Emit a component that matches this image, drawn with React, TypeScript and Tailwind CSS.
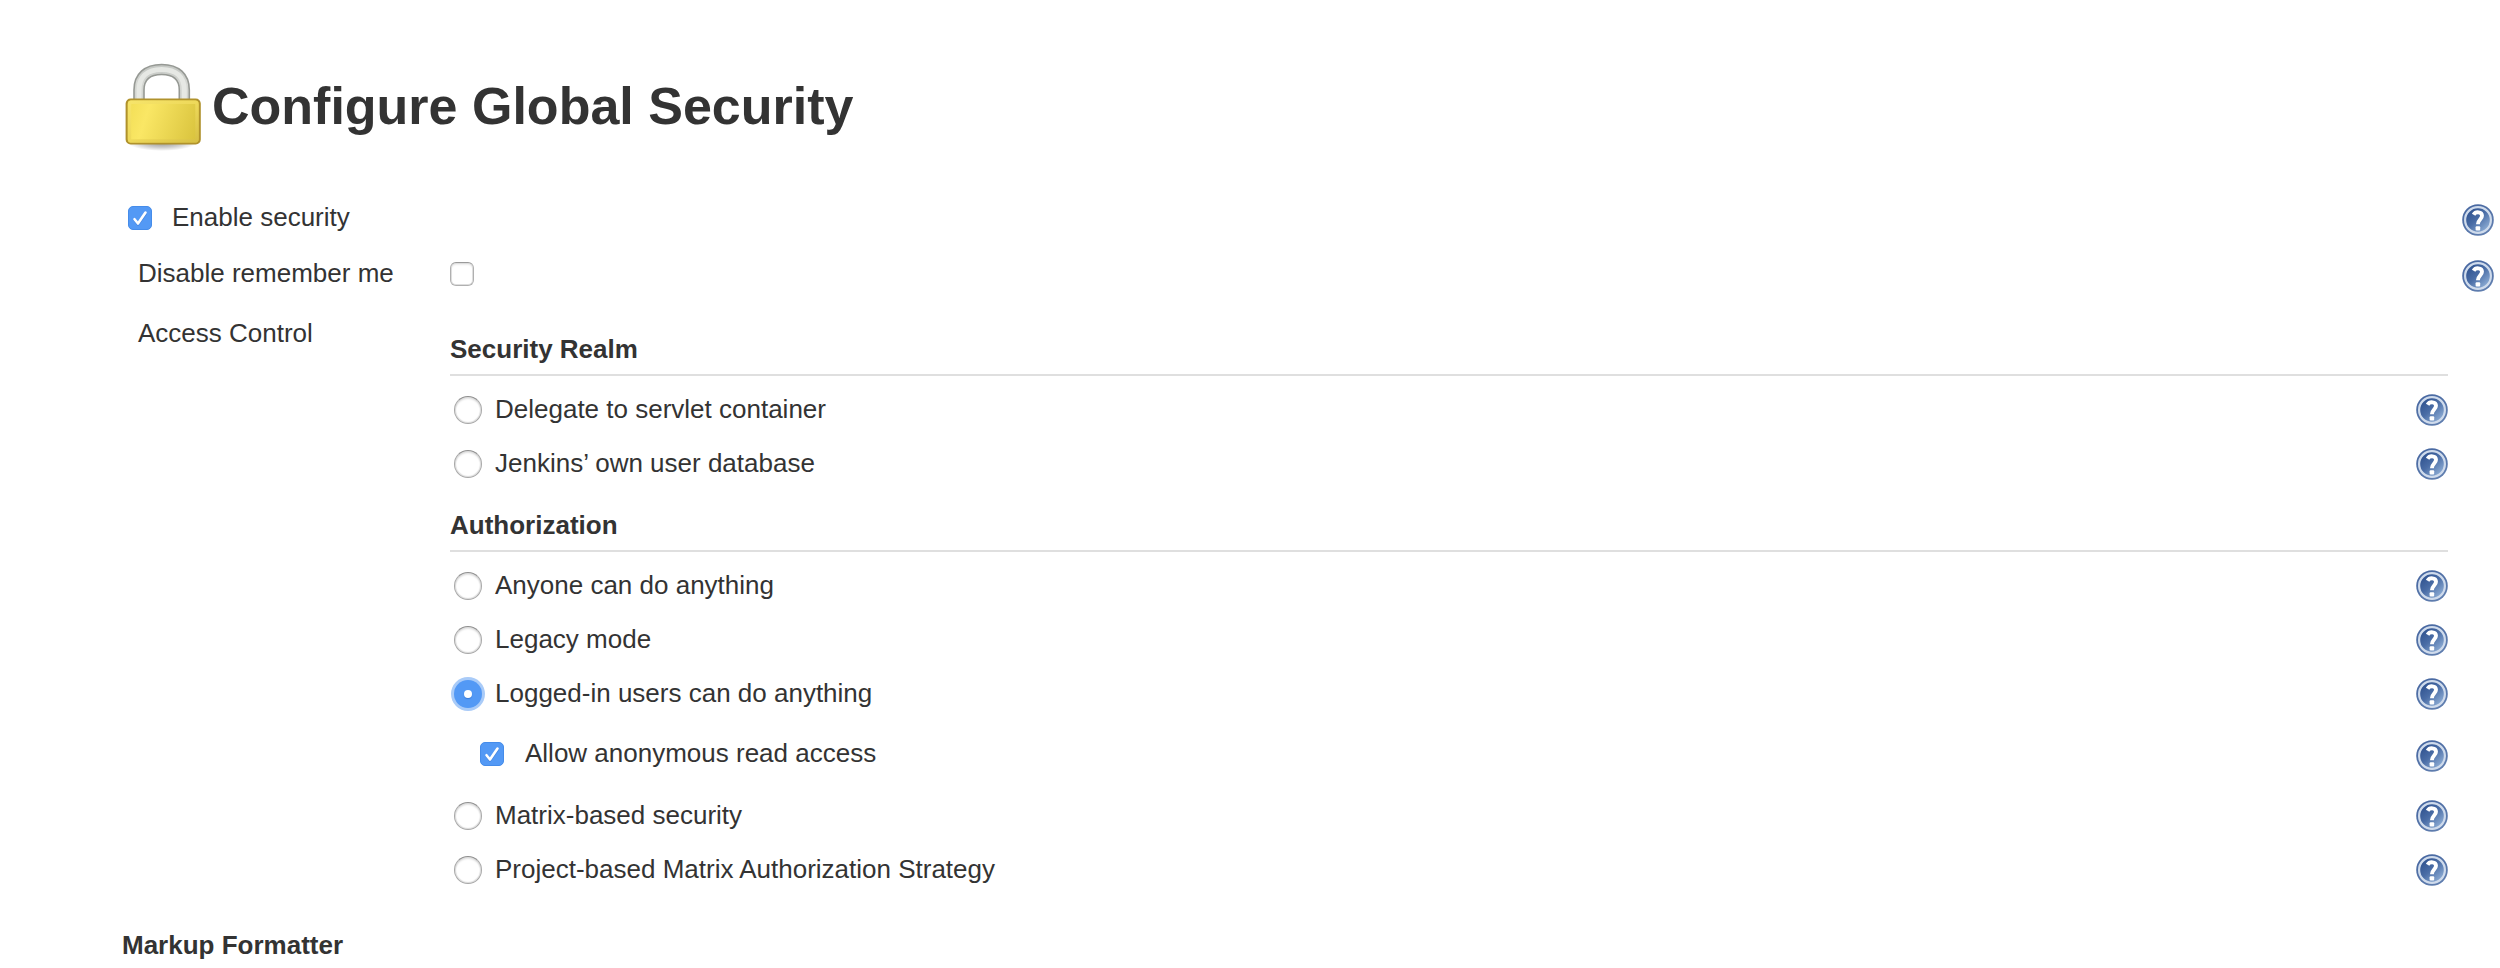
import React from "react";

function HelpIcon() {
  return (
    <svg viewBox="0 0 32 32" className="block h-8 w-8" aria-hidden="true">
      <defs>
        <linearGradient id="help-fill" x1="0.15" y1="0.1" x2="0.9" y2="0.9">
          <stop offset="0" stopColor="#2f528f" />
          <stop offset="0.45" stopColor="#4a6da6" />
          <stop offset="1" stopColor="#94b3d9" />
        </linearGradient>
        <linearGradient id="help-edge" x1="0.2" y1="0" x2="0.8" y2="1">
          <stop offset="0" stopColor="#4666a0" />
          <stop offset="1" stopColor="#6280b0" />
        </linearGradient>
      </defs>
      <circle cx="16" cy="16" r="15.8" fill="url(#help-edge)" />
      <circle cx="16" cy="16" r="12.900" fill="url(#help-fill)" stroke="#cfdbec" strokeWidth="2.200" />
      <path d="M11.600 10.700 C13.500 7.300 20 7.400 20 11.800 C20 15.400 15.900 15.800 15.900 20.300" fill="none" stroke="#fff" strokeWidth="3.900" />
      <rect x="13.600" y="22.200" width="4.600" height="4.400" rx="1" fill="#fff" />
    </svg>
  );
}

function LockIcon() {
  return (
    <svg viewBox="0 0 96 96" className="block h-24 w-24 shrink-0" aria-hidden="true">
      <defs>
        <linearGradient id="lock-body" x1="0" y1="0.4" x2="1" y2="0.6">
          <stop offset="0" stopColor="#f3df58" />
          <stop offset="0.25" stopColor="#fae765" />
          <stop offset="1" stopColor="#dac43e" />
        </linearGradient>
        <linearGradient id="lock-rim" x1="0" y1="0" x2="1" y2="1">
          <stop offset="0" stopColor="#f6e46a" />
          <stop offset="0.5" stopColor="#eed95a" />
          <stop offset="1" stopColor="#d8c145" />
        </linearGradient>
        <linearGradient id="lock-metal" x1="0" y1="0" x2="0" y2="1">
          <stop offset="0" stopColor="#c6c9c5" />
          <stop offset="0.4" stopColor="#d6d8d4" />
          <stop offset="1" stopColor="#cfd2cd" />
        </linearGradient>
        <radialGradient id="lock-shadow">
          <stop offset="0" stopColor="#000" stopOpacity="0.45" />
          <stop offset="0.6" stopColor="#000" stopOpacity="0.2" />
          <stop offset="1" stopColor="#000" stopOpacity="0" />
        </radialGradient>
      </defs>
      <ellipse cx="47" cy="86" rx="35" ry="9" fill="url(#lock-shadow)" />
      <g fill="none">
        <path d="M24 48 V34 C24 21 32 13.500 46.700 13.500 S69.300 21 69.300 34 V48" stroke="#969994" strokeWidth="11.600" />
        <path d="M24 48 V34 C24 21 32 13.500 46.700 13.500 S69.300 21 69.300 34 V48" stroke="url(#lock-metal)" strokeWidth="8.400" />
        <path d="M24 48 V34 C24 21 32 13.500 46.700 13.500 S69.300 21 69.300 34 V48" stroke="#e6e8e4" strokeWidth="5" />
      </g>
      <rect x="11.700" y="43.500" width="73" height="44" rx="4" fill="url(#lock-body)" stroke="#b0922c" strokeWidth="2.200" />
      <rect x="14.500" y="46.200" width="67.500" height="38.700" rx="2" fill="none" stroke="url(#lock-rim)" strokeWidth="3.400" />
    </svg>
  );
}

function Checkbox({ checked = false }: { checked?: boolean }) {
  if (checked) {
    return (
      <span className="block h-6 w-6 shrink-0 rounded-[5px] border border-[#458cea] bg-[#5399f5]">
        <svg viewBox="1 1 22 22" className="block h-[22px] w-[22px]" aria-hidden="true">
          <path d="M6.500 14 L10 18.500 L17.500 8" fill="none" stroke="#2f70cd" strokeOpacity="0.5" strokeWidth="2.400" strokeLinecap="round" strokeLinejoin="round" />
          <path d="M6.500 13.200 L10 17.500 L17.500 6.500" fill="none" stroke="#fff" strokeWidth="2.600" strokeLinecap="round" strokeLinejoin="round" />
        </svg>
      </span>
    );
  }
  return (
    <span className="block h-6 w-6 shrink-0 rounded-[6px] border border-[#b0b0b0] border-t-[#9a9a9a] bg-white shadow-[inset_0_0_0_1px_#dedede,inset_0_2px_2px_#ececec]" />
  );
}

function Radio({ checked = false }: { checked?: boolean }) {
  if (checked) {
    return (
      <span className="flex h-7 w-7 shrink-0 items-center justify-center rounded-full bg-[#5399f5] shadow-[0_0_0_3px_#a9cbf8]">
        <span className="block h-2 w-2 rounded-full bg-white shadow-[0_1px_1px_#3b7bd6]" />
      </span>
    );
  }
  return (
    <span className="block h-7 w-7 shrink-0 rounded-full border border-[#a8a8a8] border-t-[#8f8f8f] bg-white shadow-[inset_0_0_1px_1px_#dcdcdc,inset_0_2px_2px_#e6e6e6]" />
  );
}

function Option({ label, checked }: { label: string; checked?: boolean }) {
  return (
    <div className="flex h-[54px] items-center pl-1">
      <Radio checked={checked} />
      <span className="mb-0.5 ml-[13px] grow">{label}</span>
      <HelpIcon />
    </div>
  );
}

function SectionTitle({ children }: { children: React.ReactNode }) {
  return <h2 className="h-[43px] border-b-2 border-[#dfdfdf] font-bold leading-8">{children}</h2>;
}

export default function App() {
  return (
    <main className="h-[968px] w-[2500px] overflow-hidden bg-white pl-[122px] pt-14 font-['Liberation_Sans',Arial,sans-serif] text-[26px] leading-8 text-[#333]">
      <h1 className="-ml-[7px] flex h-24 items-center text-[52px] font-bold leading-[60px]">
        <LockIcon />
        <span className="ml-px mt-1">Configure Global Security</span>
      </h1>
      <div className="mt-[38px] flex h-14 items-center pl-1.5 pr-1.5">
        <Checkbox checked />
        <span className="mb-0.5 ml-5 grow">Enable security</span>
        <div className="mt-1">
          <HelpIcon />
        </div>
      </div>
      <div className="flex h-14 items-center pl-4 pr-1.5">
        <span className="mb-0.5 w-[312px]">Disable remember me</span>
        <Checkbox />
        <span className="grow" />
        <div className="mt-1">
          <HelpIcon />
        </div>
      </div>
      <div className="flex pl-4 pr-[52px]">
        <span className="w-[312px] shrink-0 pt-[15px]">Access Control</span>
        <div className="grow pt-[31px]">
          <SectionTitle>Security Realm</SectionTitle>
          <div className="pt-[7px]">
            <Option label="Delegate to servlet container" />
            <Option label="Jenkins’ own user database" />
          </div>
          <div className="pt-[18px]">
            <SectionTitle>Authorization</SectionTitle>
          </div>
          <div className="pt-[7px]">
            <Option label="Anyone can do anything" />
            <Option label="Legacy mode" />
            <Option label="Logged-in users can do anything" checked />
            <div className="flex h-[68px] items-center pl-[30px]">
              <div className="mb-0.5">
                <Checkbox checked />
              </div>
              <span className="mb-1 ml-[21px] grow">Allow anonymous read access</span>
              <div className="mt-0.5">
                <HelpIcon />
              </div>
            </div>
            <Option label="Matrix-based security" />
            <Option label="Project-based Matrix Authorization Strategy" />
          </div>
        </div>
      </div>
      <h2 className="mt-8 font-bold">Markup Formatter</h2>
    </main>
  );
}
